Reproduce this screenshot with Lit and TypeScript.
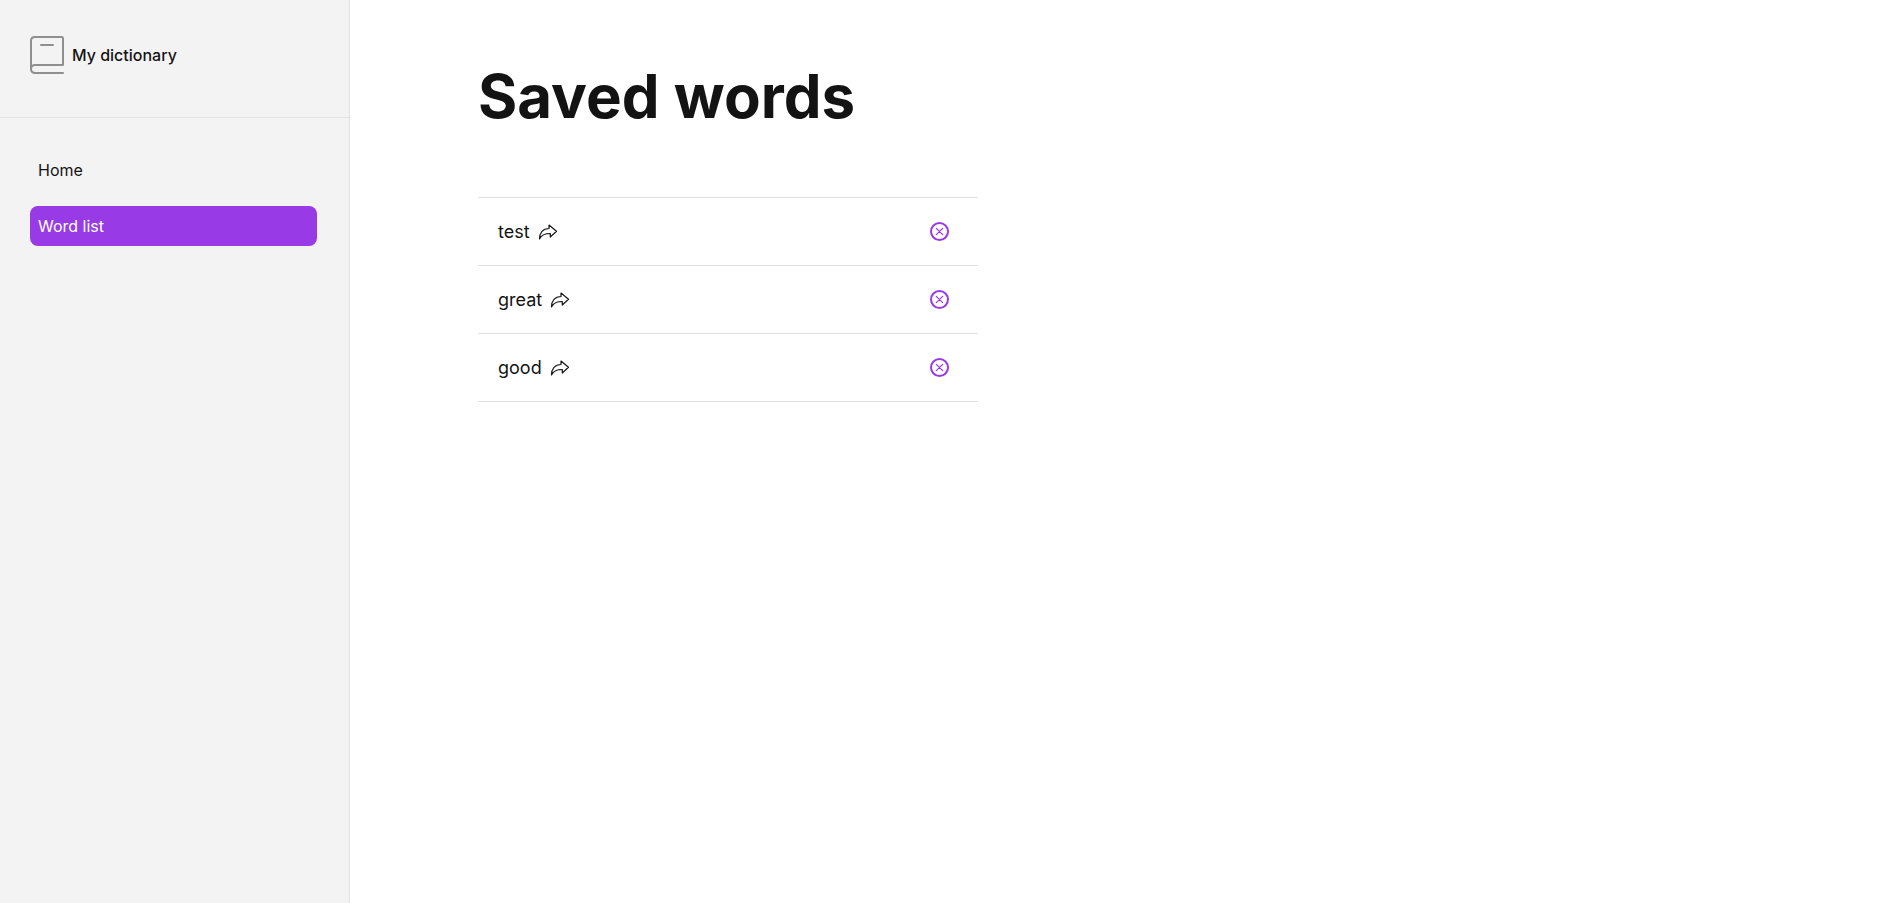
import { LitElement, html, css } from "lit";
import { customElement, property, state } from "lit/decorators.js";

@customElement("side-bar")
class SideBar extends LitElement {
  static styles = css`
    :host {
      display: block;
      box-sizing: border-box;
      background: #f3f3f3;
      border-right: 1px solid #e2e2e2;
    }
    .brand {
      display: flex;
      align-items: center;
      gap: 8px;
      padding: 35px 30px 43px;
      border-bottom: 1px solid #e2e2e2;
      font-size: 16px;
      font-weight: 500;
      line-height: 24px;
    }
    .logo {
      width: 34px;
      height: 39px;
      fill: none;
      stroke: #8f8f8f;
      stroke-width: 2;
      stroke-linecap: round;
      stroke-linejoin: round;
    }
    .menu {
      display: flex;
      flex-direction: column;
      gap: 16px;
      margin: 0;
      padding: 32px 32px 32px 30px;
      list-style: none;
    }
    .link {
      display: block;
      padding: 8px;
      border-radius: 8px;
      color: inherit;
      font-size: 16px;
      line-height: 24px;
      text-decoration: none;
    }
    .active {
      background: #983ae6;
      color: #fff;
    }
  `;

  render() {
    return html`
      <div class="brand">
        <svg class="logo" viewBox="0 0 34 39" aria-hidden="true">
          <path d="M1 33.500V6Q1 2 5 2H31.500Q33 2 33 3.500V30H5.500Q1 30 1 34Q1 38 5.500 38H33M11 10H23" />
        </svg>
        <span>My dictionary</span>
      </div>
      <nav>
        <ul class="menu">
          <li><a class="link" href="#home">Home</a></li>
          <li><a class="link active" href="#words" aria-current="page">Word list</a></li>
        </ul>
      </nav>
    `;
  }
}

@customElement("word-row")
class WordRow extends LitElement {
  static styles = css`
    :host {
      display: flex;
      align-items: center;
      justify-content: space-between;
      padding: 20px 28px 20px 20px;
      border-bottom: 1px solid #e2e2e2;
      font-size: 18px;
      line-height: 27px;
    }
    .word {
      display: flex;
      align-items: center;
      gap: 8px;
      color: inherit;
      text-decoration: none;
    }
    .share {
      width: 20px;
      height: 20px;
      fill: none;
      stroke: #161616;
      stroke-width: 1.2;
      stroke-linejoin: round;
    }
    .remove {
      display: flex;
      padding: 0;
      border: 0;
      background: none;
      cursor: pointer;
    }
    .cross {
      width: 21px;
      height: 21px;
      fill: none;
      stroke: #983ae6;
      stroke-linecap: round;
    }
    .ring {
      stroke-width: 2;
    }
    .lines {
      stroke-width: 1.2;
    }
  `;

  @property() word = "";

  private remove() {
    this.dispatchEvent(new CustomEvent("remove-word", { detail: this.word }));
  }

  render() {
    return html`
      <a class="word" href="#${this.word}">
        <span>${this.word}</span>
        <svg class="share" viewBox="0 0 20 20" aria-hidden="true">
          <path d="M1.500 17C1.500 10.500 5 6.500 11 6.500V3L18.500 9.300L12.300 15V11.500C7 11.500 3.500 12.500 1.500 17Z" />
        </svg>
      </a>
      <button class="remove" aria-label="Remove ${this.word}" @click=${this.remove}>
        <svg class="cross" viewBox="0 0 21 21" aria-hidden="true">
          <circle class="ring" cx="10.500" cy="10.500" r="8.500" />
          <path class="lines" d="M7.300 7.300L13.700 13.700M13.700 7.300L7.300 13.700" />
        </svg>
      </button>
    `;
  }
}

@customElement("app-root")
class AppRoot extends LitElement {
  static styles = css`
    :host {
      display: grid;
      grid-template-columns: 350px 1fr;
      min-height: 100vh;
      background: #fff;
      color: #131313;
      font-family: Inter, "Liberation Sans", sans-serif;
    }
    .content {
      padding: 56px 128px;
    }
    .title {
      margin: 0;
      font-size: 60px;
      font-weight: 700;
      line-height: 80px;
    }
    .words {
      max-width: 500px;
      margin: 61px 0 0;
      padding: 0;
      border-top: 1px solid #e2e2e2;
      list-style: none;
    }
  `;

  @state() private words = ["test", "great", "good"];

  private removeWord(e: CustomEvent<string>) {
    this.words = this.words.filter((w) => w !== e.detail);
  }

  render() {
    return html`
      <side-bar></side-bar>
      <main class="content">
        <h1 class="title">Saved words</h1>
        <ul class="words">
          ${this.words.map(
            (w) => html`<li><word-row .word=${w} @remove-word=${this.removeWord}></word-row></li>`
          )}
        </ul>
      </main>
    `;
  }
}
